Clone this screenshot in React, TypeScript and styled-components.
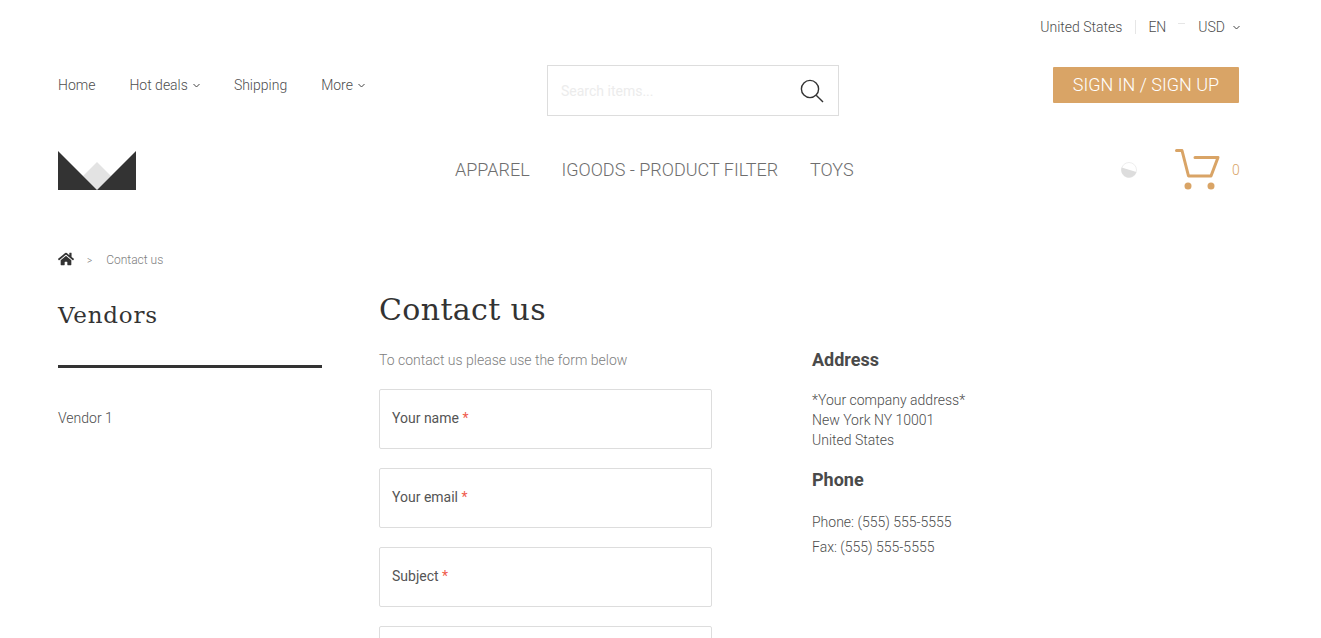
import React from 'react';
import styled, { createGlobalStyle } from 'styled-components';
import { FaHome } from 'react-icons/fa';

const GlobalStyle = createGlobalStyle`
  html, body {
    margin: 0;
    padding: 0;
    background: #fff;
    height: 638px;
    overflow: hidden;
  }
  body {
    font-family: Roboto, "Liberation Sans", sans-serif;
    font-weight: 300;
    color: #333;
  }
`;

const Page = styled.div`
  padding: 0 81px 0 58px;
`;

const TopBar = styled.div`
  display: flex;
  justify-content: flex-end;
  align-items: center;
  height: 20px;
  padding-top: 17px;
  margin-bottom: 28px;
  font-size: 14px;
  font-weight: 300;
  color: #4d4d4d;
`;

const Country = styled.span`
  padding-right: 13px;
  border-right: 1px solid #e6e6e6;
  line-height: 14px;
`;

const Lang = styled.span`
  margin-left: 12px;
  position: relative;
  padding-right: 32px;

  &::after {
    content: '';
    position: absolute;
    right: 13px;
    top: 4px;
    width: 7px;
    height: 1px;
    background: #e6e6e6;
  }
`;

const Chevron = styled.svg<{ $gap: number }>`
  width: 7px;
  height: 5px;
  margin-left: ${(props) => props.$gap}px;
  flex: none;
`;

const HeaderRow = styled.div`
  display: grid;
  grid-template-columns: 489px 292px 1fr;
  align-items: start;
  height: 85px;
`;

const Nav = styled.nav`
  display: flex;
  gap: 34px;
  padding-top: 10px;
  font-size: 14px;
  line-height: 20px;
  color: #4d4d4d;
`;

const NavItem = styled.span`
  display: flex;
  align-items: center;
`;

const Search = styled.div`
  display: flex;
  align-items: center;
  justify-content: space-between;
  box-sizing: border-box;
  height: 51px;
  padding: 0 13px;
  border: 1px solid #ddd;
`;

const SearchHint = styled.span`
  font-size: 14px;
  font-weight: 400;
  color: #ececec;
`;

const SignIn = styled.button`
  justify-self: end;
  width: 186px;
  height: 36px;
  margin: 2px 1px 0 0;
  border: 0;
  border-radius: 1px;
  padding: 0 0 2px;
  background: #d9a466;
  color: #fff;
  font-family: inherit;
  font-weight: 300;
  font-size: 18px;
`;

const BrandRow = styled.div`
  display: grid;
  grid-template-columns: 397px 1fr auto;
  grid-template-rows: 40px;
  align-items: center;
  margin-bottom: 60px;
`;

const Menu = styled.div`
  display: flex;
  gap: 31.75px;
  padding-bottom: 2px;
  font-size: 18px;
  color: #6e6e6e;
`;

const CartArea = styled.div`
  display: flex;
  align-items: center;
  padding-bottom: 2px;
`;

const CartCount = styled.span`
  margin: 2px 0 0 12px;
  width: 8px;
  font-size: 14px;
  color: #d9a466;
`;

const Crumbs = styled.div`
  display: flex;
  align-items: center;
  height: 20px;
  margin-bottom: 21px;
  font-size: 12px;
  color: #808080;
`;

const HomeIcon = styled(FaHome)`
  margin-top: -2px;
`;

const CrumbSep = styled.span`
  margin: 0 14px 0 13px;
  font-size: 10px;
`;

const Columns = styled.div`
  display: grid;
  grid-template-columns: 264px 333px 1fr;
  column-gap: 57px;
`;

const Sidebar = styled.aside`
  padding-top: 9px;
`;

const SideTitle = styled.h3`
  margin: 0;
  height: 65px;
  border-bottom: 3px solid #333;
  font-family: "DejaVu Serif", serif;
  font-weight: 400;
  font-size: 23px;
  line-height: 30px;
  letter-spacing: 0.8px;
  color: #333;
`;

const SideLink = styled.div`
  margin-top: 40px;
  font-size: 14px;
  line-height: 20px;
  color: #4d4d4d;
`;

const FormColumn = styled.section``;

const Heading = styled.h1`
  margin: 0 0 21px;
  font-family: "DejaVu Serif", serif;
  font-weight: 400;
  font-size: 30px;
  line-height: 38px;
  letter-spacing: 0.35px;
  color: #333;
`;

const Lead = styled.p`
  margin: 0 0 19px;
  font-size: 14px;
  line-height: 20px;
  color: #808080;
`;

const Fields = styled.div`
  display: flex;
  flex-direction: column;
  gap: 19px;
`;

const Field = styled.div`
  box-sizing: border-box;
  height: 60px;
  padding: 18px 12px 0;
  border: 1px solid #ddd;
  border-radius: 2px;
  font-size: 14px;
  font-weight: 400;
  line-height: 20px;
  color: #555;
`;

const Required = styled.span`
  color: #ef5b4c;
`;

const InfoColumn = styled.section`
  margin-left: 43px;
  padding-top: 57px;
  font-size: 14px;
  color: #4d4d4d;
`;

const InfoTitle = styled.h4`
  margin: 0 0 18px;
  font-size: 18px;
  font-weight: 700;
  line-height: 24px;
  color: #4a4a4a;
`;

const InfoText = styled.div`
  line-height: 20px;
  margin-bottom: 18px;
`;

const ContactLine = styled.div`
  line-height: 25px;
`;

const DotIcon = styled.svg`
  margin: 2px 38px 0 0;
`;

const ChevronDown: React.FC<{ gap?: number }> = ({ gap = 5 }) => (
  <Chevron $gap={gap} viewBox="0 0 7 5" fill="none" stroke="#444" strokeWidth="1">
    <path d="M.5 1 3.5 4 6.5 1" />
  </Chevron>
);

const Logo = () => (
  <svg width="78" height="39" viewBox="0 0 78 39">
    <path d="M39 11 53 25 39 39 25 25Z" fill="#e3e3e3" />
    <path d="M0 0 39 39H0ZM78 0V39H39Z" fill="#333" />
  </svg>
);

const LoaderDot = () => (
  <DotIcon width="16" height="16" viewBox="0 0 16 16">
    <circle cx="8" cy="8" r="7.5" fill="#fff" stroke="#eee" />
    <path d="M.6 5.5 15.4 10A7.5 7.5 0 0 1 .6 5.5Z" fill="#ddd" />
  </DotIcon>
);

const CartIcon = () => (
  <svg width="45" height="41" viewBox="0 0 45 41" fill="none" stroke="#d9a466" strokeWidth="3" strokeLinecap="round" strokeLinejoin="round">
    <path d="M1.5 1.5H7L13.5 27H36L43 8.5H20" />
    <circle cx="13" cy="37" r="3.5" fill="#d9a466" stroke="none" />
    <circle cx="36" cy="37" r="3.5" fill="#d9a466" stroke="none" />
  </svg>
);

const SearchIcon = () => (
  <svg width="26" height="26" viewBox="0 0 26 26" fill="none" stroke="#333" strokeWidth="1.4">
    <circle cx="11" cy="11" r="8.6" />
    <path d="M17.2 17.2 24 24" />
  </svg>
);

const App: React.FC = () => {
  return (
    <Page>
      <GlobalStyle />
      <TopBar>
        <Country>United States</Country>
        <Lang>EN</Lang>
        <span>USD</span>
        <ChevronDown gap={8} />
      </TopBar>

      <HeaderRow>
        <Nav>
          <NavItem>Home</NavItem>
          <NavItem>Hot deals<ChevronDown /></NavItem>
          <NavItem>Shipping</NavItem>
          <NavItem>More<ChevronDown /></NavItem>
        </Nav>
        <Search>
          <SearchHint>Search items...</SearchHint>
          <SearchIcon />
        </Search>
        <SignIn>SIGN IN / SIGN UP</SignIn>
      </HeaderRow>

      <BrandRow>
        <Logo />
        <Menu>
          <span>APPAREL</span>
          <span>IGOODS - PRODUCT FILTER</span>
          <span>TOYS</span>
        </Menu>
        <CartArea>
          <LoaderDot />
          <CartIcon />
          <CartCount>0</CartCount>
        </CartArea>
      </BrandRow>

      <Crumbs>
        <HomeIcon size={16} color="#333" />
        <CrumbSep>&gt;</CrumbSep>
        <span>Contact us</span>
      </Crumbs>

      <Columns>
        <Sidebar>
          <SideTitle>Vendors</SideTitle>
          <SideLink>Vendor 1</SideLink>
        </Sidebar>

        <FormColumn>
          <Heading>Contact us</Heading>
          <Lead>To contact us please use the form below</Lead>
          <Fields>
            <Field>Your name <Required>*</Required></Field>
            <Field>Your email <Required>*</Required></Field>
            <Field>Subject <Required>*</Required></Field>
            <Field />
          </Fields>
        </FormColumn>

        <InfoColumn>
          <InfoTitle>Address</InfoTitle>
          <InfoText>
            *Your company address*<br />
            New York NY 10001<br />
            United States
          </InfoText>
          <InfoTitle>Phone</InfoTitle>
          <ContactLine>Phone: (555) 555-5555</ContactLine>
          <ContactLine>Fax: (555) 555-5555</ContactLine>
        </InfoColumn>
      </Columns>
    </Page>
  );
};

export default App;
